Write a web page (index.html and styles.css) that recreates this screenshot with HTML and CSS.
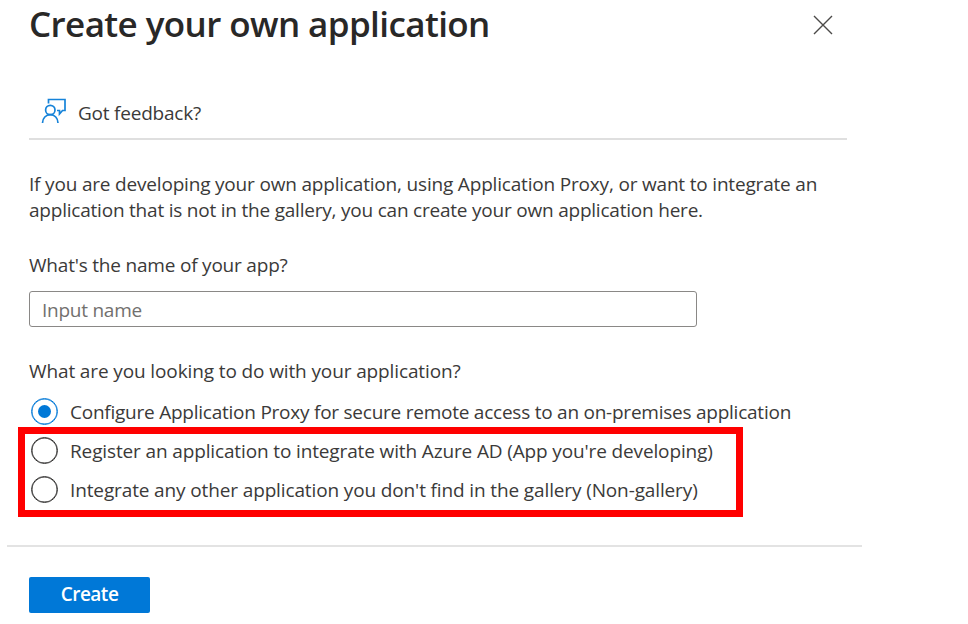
FILE: index.html
```
<!DOCTYPE html>
<html lang="en">
<head>
<meta charset="utf-8">
<title>Create your own application</title>
<link rel="stylesheet" href="styles.css">
</head>
<body>
<main class="panel">
  <header class="header">
    <h1 class="title">Create your own application</h1>
    <svg class="close" viewBox="0 0 20 20" role="img" aria-label="Close"><path d="M1 1 19 19M19 1 1 19"/></svg>
  </header>
  <div class="toolbar">
    <svg class="feedback-icon" viewBox="0 0 26 26" aria-hidden="true"><path d="M7.500 5.500V1.500H24V12.500H21.500L18.500 16V12.500H16"/><circle cx="9.300" cy="12" r="4.700"/><path d="M1.500 25C1.500 20 5 16.700 9.300 16.700S17 20 17 25"/></svg>
    <span class="feedback">Got feedback?</span>
  </div>
  <p class="intro"><span class="intro-first">If you are developing your own application, using Application Proxy, or want to integrate an</span><br><span class="intro-second">application that is not in the gallery, you can create your own application here.</span></p>
  <label class="label name-label" for="name">What's the name of your app?</label>
  <input class="input" id="name" type="text" placeholder="Input name">
  <div class="label question">What are you looking to do with your application?</div>
  <div class="options">
    <div class="option"><span class="radio selected"></span><span class="configure">Configure Application Proxy for secure remote access to an on-premises application</span></div>
    <div class="highlight">
      <div class="option"><span class="radio"></span><span class="register">Register an application to integrate with Azure AD (App you're developing)</span></div>
      <div class="option"><span class="radio"></span><span class="integrate">Integrate any other application you don't find in the gallery (Non-gallery)</span></div>
    </div>
  </div>
</main>
<footer class="footer"><button class="create" type="button">Create</button></footer>
</body>
</html>
```
FILE: styles.css
```
* { box-sizing: border-box; }
body {
  margin: 0;
  width: 968px;
  height: 624px;
  overflow: hidden;
  background: #fff;
  color: #3b3a39;
  font-family: "Open Sans", "Noto Sans", sans-serif;
  font-size: 19px;
  line-height: 26px;
  white-space: nowrap;
}
.panel { width: 847px; padding-left: 29px; }
.header { display: flex; align-items: center; justify-content: space-between; height: 50px; padding-right: 14px; }
.title { margin: 0; padding-bottom: 2px; font-size: 35px; font-weight: 600; line-height: 48px; letter-spacing: -0.6px; color: #292827; }
.close { width: 20px; height: 20px; fill: none; stroke: #4b4a48; stroke-width: 1.4; }
.toolbar { display: flex; align-items: center; height: 90px; padding: 37px 0 0 12px; border-bottom: 2px solid #dfdfdf; }
.feedback-icon { width: 26px; height: 26px; margin: 0 11px 3px 0; fill: none; stroke: #1683d9; stroke-width: 1.7; }
.feedback { letter-spacing: -0.22px; }
.intro { margin: 31px 0 0; }
.intro-first { letter-spacing: -0.185px; }
.intro-second { letter-spacing: -0.215px; }
.label { display: block; margin-top: 29px; }
.name-label { letter-spacing: -0.2px; }
.input { display: block; width: 668px; height: 36px; margin-top: 13px; padding: 1px 12px 0; border: 1px solid #8a8886; border-radius: 3px; font: inherit; letter-spacing: -0.25px; color: inherit; }
.input::placeholder { color: #72706e; opacity: 1; }
.question { margin-top: 31px; letter-spacing: -0.12px; }
.options { margin-top: 14px; }
.option { display: flex; align-items: center; height: 27px; padding-left: 2px; }
.radio { display: grid; place-items: center; width: 27px; height: 27px; margin-right: 12px; border: 1px solid #323130; border-radius: 50%; box-shadow: inset 0 0 0 0.5px #323130; }
.selected { border-color: #0078d7; box-shadow: inset 0 0 0 0.5px #0078d7; }
.selected::after { content: ""; width: 13px; height: 13px; border-radius: 50%; background: #0078d7; }
.configure { letter-spacing: -0.24px; }
.register { letter-spacing: -0.135px; }
.integrate { letter-spacing: -0.13px; }
.highlight { display: grid; align-content: start; gap: 12px; width: 725px; height: 90px; margin: 2px 0 0 -11px; padding: 3px 0 0 4px; border: 7px solid #f00; }
.footer { width: 855px; margin: 28px 0 0 7px; padding: 30px 0 0 22px; border-top: 2px solid #e3e3e3; }
.create { display: block; width: 121px; height: 36px; padding: 0 0 2px; border: 0; border-radius: 2px; background: #0078d7; color: #fff; font: 600 19px/32px "Open Sans", sans-serif; letter-spacing: -0.5px; }
```
